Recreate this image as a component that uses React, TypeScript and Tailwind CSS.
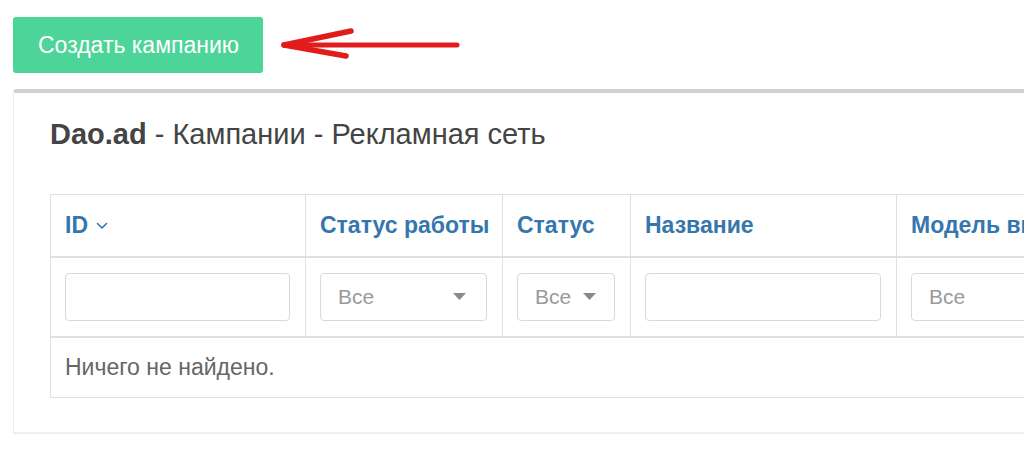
import React from "react";

const FONT = { fontFamily: '"Liberation Sans", Arial, sans-serif' };

function Caret() {
  return (
    <svg width="13" height="7" viewBox="0 0 13 7" className="shrink-0">
      <path d="M0 0 L13 0 L6.5 7 Z" fill="#8a8a8a" />
    </svg>
  );
}

function Chevron() {
  return (
    <svg width="12" height="8" viewBox="0 0 12 8" className="ml-[8px] mt-[2px]">
      <path d="M1.5 1.5 L6 6 L10.5 1.5" fill="none" stroke="#3676ae" strokeWidth="1.6" strokeLinecap="round" strokeLinejoin="round" />
    </svg>
  );
}

function SelectBox({ w, caret = true }: { w: string; caret?: boolean }) {
  return (
    <div className={`${w} h-[48px] border border-[#d9d9d9] rounded-[4px] bg-white flex items-center justify-between pl-[17px] pr-[20px]`}>
      <span className="text-[21px] text-[#9a9a9a]">Все</span>
      {caret && <Caret />}
    </div>
  );
}

export default function App() {
  const th = "border border-[#e0e0e0] border-b-2 pl-[14px] pr-[15px] text-left align-middle text-[23px] font-bold text-[#3676ae] whitespace-nowrap overflow-visible";
  const td = "border border-[#e0e0e0] border-b-2 pl-[14px] pr-[15px] align-middle";
  return (
    <div className="w-[1024px] h-[463px] overflow-hidden bg-white" style={FONT}>
      <div className="flex items-center pt-[17px] pl-[13px]">
        <button className="h-[56px] w-[250px] rounded-[3px] bg-[#4dd498] text-white text-[23px] flex items-center pl-[25px]">
          Создать кампанию
        </button>
        <svg width="182" height="40" viewBox="0 0 182 40" className="ml-[16px] mt-[-2px]">
          <path d="M8 21 L178 21" stroke="#e21c1c" strokeWidth="5" strokeLinecap="round" />
          <path d="M5 21 L72 7" stroke="#e21c1c" strokeWidth="5.5" strokeLinecap="round" />
          <path d="M5 21 L67 32" stroke="#e21c1c" strokeWidth="5.5" strokeLinecap="round" />
        </svg>
      </div>
      <div className="ml-[13px] mt-[16px] w-[1100px] h-[345px] border-t-[4px] border-t-[#d0d0d0] border-l border-l-[#ececec] border-b-2 border-b-[#eeeeee] rounded-t-[4px] pl-[36px] pt-[25px]">
        <div className="text-[29px] leading-[32px] text-[#444]">
          <span className="font-bold">Dao.ad</span> - Кампании - Рекламная сеть
        </div>
        <table className="mt-[44px] border-collapse table-fixed w-[1100px]">
          <colgroup>
            <col className="w-[255px]" />
            <col className="w-[197px]" />
            <col className="w-[128px]" />
            <col className="w-[266px]" />
            <col className="w-[254px]" />
          </colgroup>
          <thead>
            <tr className="h-[62px]">
              <th className={th}>
                <span className="flex items-center">ID<Chevron /></span>
              </th>
              <th className={th}>Статус работы</th>
              <th className={th}>Статус</th>
              <th className={th}>Название</th>
              <th className={th}>Модель выкупа</th>
            </tr>
            <tr className="h-[80px]">
              <td className={td}>
                <div className="h-[48px] border border-[#d9d9d9] rounded-[4px] bg-white" />
              </td>
              <td className={td}>
                <SelectBox w="w-full" />
              </td>
              <td className={td}>
                <div className="h-[48px] border border-[#d9d9d9] rounded-[4px] bg-white flex items-center pl-[17px] gap-[12px]">
                  <span className="text-[21px] text-[#9a9a9a]">Все</span>
                  <Caret />
                </div>
              </td>
              <td className={td}>
                <div className="h-[48px] border border-[#d9d9d9] rounded-[4px] bg-white" />
              </td>
              <td className={td}>
                <SelectBox w="w-full" />
              </td>
            </tr>
          </thead>
          <tbody>
            <tr className="h-[61px]">
              <td colSpan={5} className="border border-[#e0e0e0] pl-[14px] pr-[15px] align-middle text-[23px] text-[#666]">
                Ничего не найдено.
              </td>
            </tr>
          </tbody>
        </table>
      </div>
    </div>
  );
}
